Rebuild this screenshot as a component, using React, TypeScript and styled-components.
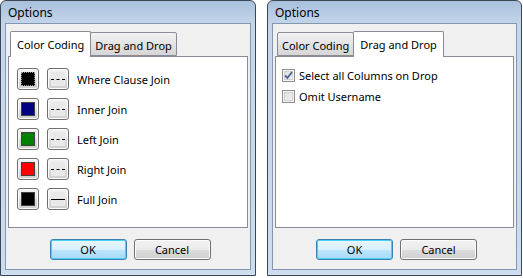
import React from 'react';
import styled, { createGlobalStyle } from 'styled-components';

const Global = createGlobalStyle`
  html, body {
    margin: 0;
    padding: 0;
    background: #ffffff;
  }
  body {
    font-family: "Noto Sans", "Open Sans", sans-serif;
    font-size: 11px;
    color: #000;
  }
`;

// Layout
const Page = styled.div`
  display: flex;
  gap: 11px;
  width: 523px;
  height: 278px;
`;

const Window = styled.div<{ $width: number }>`
  width: ${p => p.$width}px;
  height: 276px;
  box-sizing: border-box;
  border: 1px solid #3d4754;
  border-radius: 6px 6px 0 0;
  background: linear-gradient(#a9c1dd, #c4d6ea 24px, #cddcee);
  display: flex;
  flex-direction: column;
  padding: 0 4px 5px;
`;

const TitleBar = styled.div`
  height: 22px;
  display: flex;
  align-items: center;
  padding-left: 3px;
  font-size: 12px;
  color: #000;
`;

const Client = styled.div`
  flex: 1;
  background: #f0f0f0;
  border: 1px solid #8397b0;
  padding: 6px 2px 0 2px;
  display: flex;
  flex-direction: column;
`;

const TabStrip = styled.div`
  display: flex;
  align-items: flex-end;
  height: 26px;
  padding-left: 2px;
  position: relative;
  z-index: 1;
`;

const Tab = styled.div<{ $active?: boolean }>`
  box-sizing: border-box;
  height: ${p => (p.$active ? 26 : 24)}px;
  padding: 0 ${p => (p.$active ? 6 : 4)}px;
  padding-top: ${p => (p.$active ? 0 : 2)}px;
  margin-bottom: ${p => (p.$active ? -1 : 0)}px;
  display: flex;
  align-items: center;
  border: 1px solid #898c95;
  border-bottom: ${p => (p.$active ? 'none' : '1px solid #898c95')};
  border-radius: 2px 2px 0 0;
  background: ${p => (p.$active ? '#ffffff' : 'linear-gradient(#f2f2f2, #e3e3e3 50%, #d6d6d6)')};
  margin-left: -1px;
  &:first-child { margin-left: 0; }
  font-size: 11px;
  white-space: nowrap;
`;

const Panel = styled.div<{ $padX: number }>`
  height: 172px;
  box-sizing: border-box;
  background: #ffffff;
  border: 1px solid #898c95;
  padding: 11px ${p => p.$padX}px;
`;

const RowList = styled.div`
  display: flex;
  flex-direction: column;
  gap: 8px;
`;

const Row = styled.div`
  display: flex;
  align-items: center;
  gap: 8px;
  height: 22px;
`;

const SmallButton = styled.div`
  width: 22px;
  height: 22px;
  box-sizing: border-box;
  border: 1px solid #707070;
  border-radius: 3px;
  background: linear-gradient(#f2f2f2, #ebebeb 50%, #dddddd 51%, #cfcfcf);
  display: flex;
  align-items: center;
  justify-content: center;
  box-shadow: inset 0 0 0 1px #fcfcfc;
`;

const Swatch = styled.div<{ $color: string; $focus?: boolean }>`
  width: 14px;
  height: 14px;
  box-sizing: border-box;
  background: ${p => p.$color};
  border: 1px ${p => (p.$focus ? 'dotted' : 'solid')} ${p => (p.$focus ? '#9a9a9a' : '#404040')};
`;

const LineSwatch = styled.div<{ $dashed?: boolean }>`
  width: 14px;
  height: 14px;
  box-sizing: border-box;
  background: #e9e9e9;
  display: flex;
  align-items: center;
  &::after {
    content: '';
    flex: 1;
    border-top: 1px ${p => (p.$dashed ? 'dashed' : 'solid')} #000;
  }
`;

const Label = styled.span`
  font-size: 11px;
`;

const CheckList = styled.div`
  display: flex;
  flex-direction: column;
  gap: 7px;
`;

const CheckRow = styled.label`
  display: flex;
  align-items: center;
  gap: 4px;
  height: 14px;
`;

const Box = styled.span`
  width: 13px;
  height: 13px;
  box-sizing: border-box;
  border: 1px solid #8e8f8f;
  background: linear-gradient(135deg, #dcdcdc, #f6f6f6);
  box-shadow: inset 0 0 0 1px #f4f4f4, inset 0 0 0 2px #d0d0d0;
  display: flex;
  align-items: center;
  justify-content: center;
`;

const ButtonBar = styled.div`
  display: flex;
  justify-content: center;
  gap: 7px;
  padding-top: 11px;
  padding-left: 4px;
`;

const PushButton = styled.div<{ $default?: boolean }>`
  width: 77px;
  height: 21px;
  box-sizing: border-box;
  border: 1px solid ${p => (p.$default ? '#3c7fb1' : '#707070')};
  border-radius: 3px;
  background: ${p =>
    p.$default
      ? 'linear-gradient(#eaf6fd, #d9f0fc 50%, #bee6fd 51%, #a7d9f5)'
      : 'linear-gradient(#f2f2f2, #ebebeb 50%, #dddddd 51%, #cfcfcf)'};
  box-shadow: inset 0 0 0 1px ${p => (p.$default ? '#48d2f9' : '#fcfcfc')};
  display: flex;
  align-items: center;
  justify-content: center;
  font-size: 11px;
`;

const joins = [
  { name: 'Where Clause Join', color: '#000000', dashed: true, focus: true },
  { name: 'Inner Join', color: '#000080', dashed: true },
  { name: 'Left Join', color: '#008000', dashed: true },
  { name: 'Right Join', color: '#ff0000', dashed: true },
  { name: 'Full Join', color: '#000000', dashed: false },
];

const Check = () => (
  <svg width="9" height="9" viewBox="0 0 9 9">
    <path d="M1 4.5 L3.5 7 L8 1" stroke="#4a5f97" strokeWidth="1.8" fill="none" />
  </svg>
);

const Buttons = () => (
  <ButtonBar>
    <PushButton $default>OK</PushButton>
    <PushButton>Cancel</PushButton>
  </ButtonBar>
);

const App = () => {
  return (
    <>
      <Global />
      <Page>
        <Window $width={256}>
          <TitleBar>Options</TitleBar>
          <Client>
            <TabStrip>
              <Tab $active>Color Coding</Tab>
              <Tab>Drag and Drop</Tab>
            </TabStrip>
            <Panel $padX={8}>
              <RowList>
                {joins.map((j, i) => (
                  <Row key={i}>
                    <SmallButton>
                      <Swatch $color={j.color} $focus={j.focus} />
                    </SmallButton>
                    <SmallButton>
                      <LineSwatch $dashed={j.dashed} />
                    </SmallButton>
                    <Label>{j.name}</Label>
                  </Row>
                ))}
              </RowList>
            </Panel>
            <Buttons />
          </Client>
        </Window>
        <Window $width={255}>
          <TitleBar>Options</TitleBar>
          <Client>
            <TabStrip>
              <Tab>Color Coding</Tab>
              <Tab $active>Drag and Drop</Tab>
            </TabStrip>
            <Panel $padX={6}>
              <CheckList>
                <CheckRow>
                  <Box><Check /></Box>
                  Select all Columns on Drop
                </CheckRow>
                <CheckRow>
                  <Box />
                  Omit Username
                </CheckRow>
              </CheckList>
            </Panel>
            <Buttons />
          </Client>
        </Window>
      </Page>
    </>
  );
};

export default App;
